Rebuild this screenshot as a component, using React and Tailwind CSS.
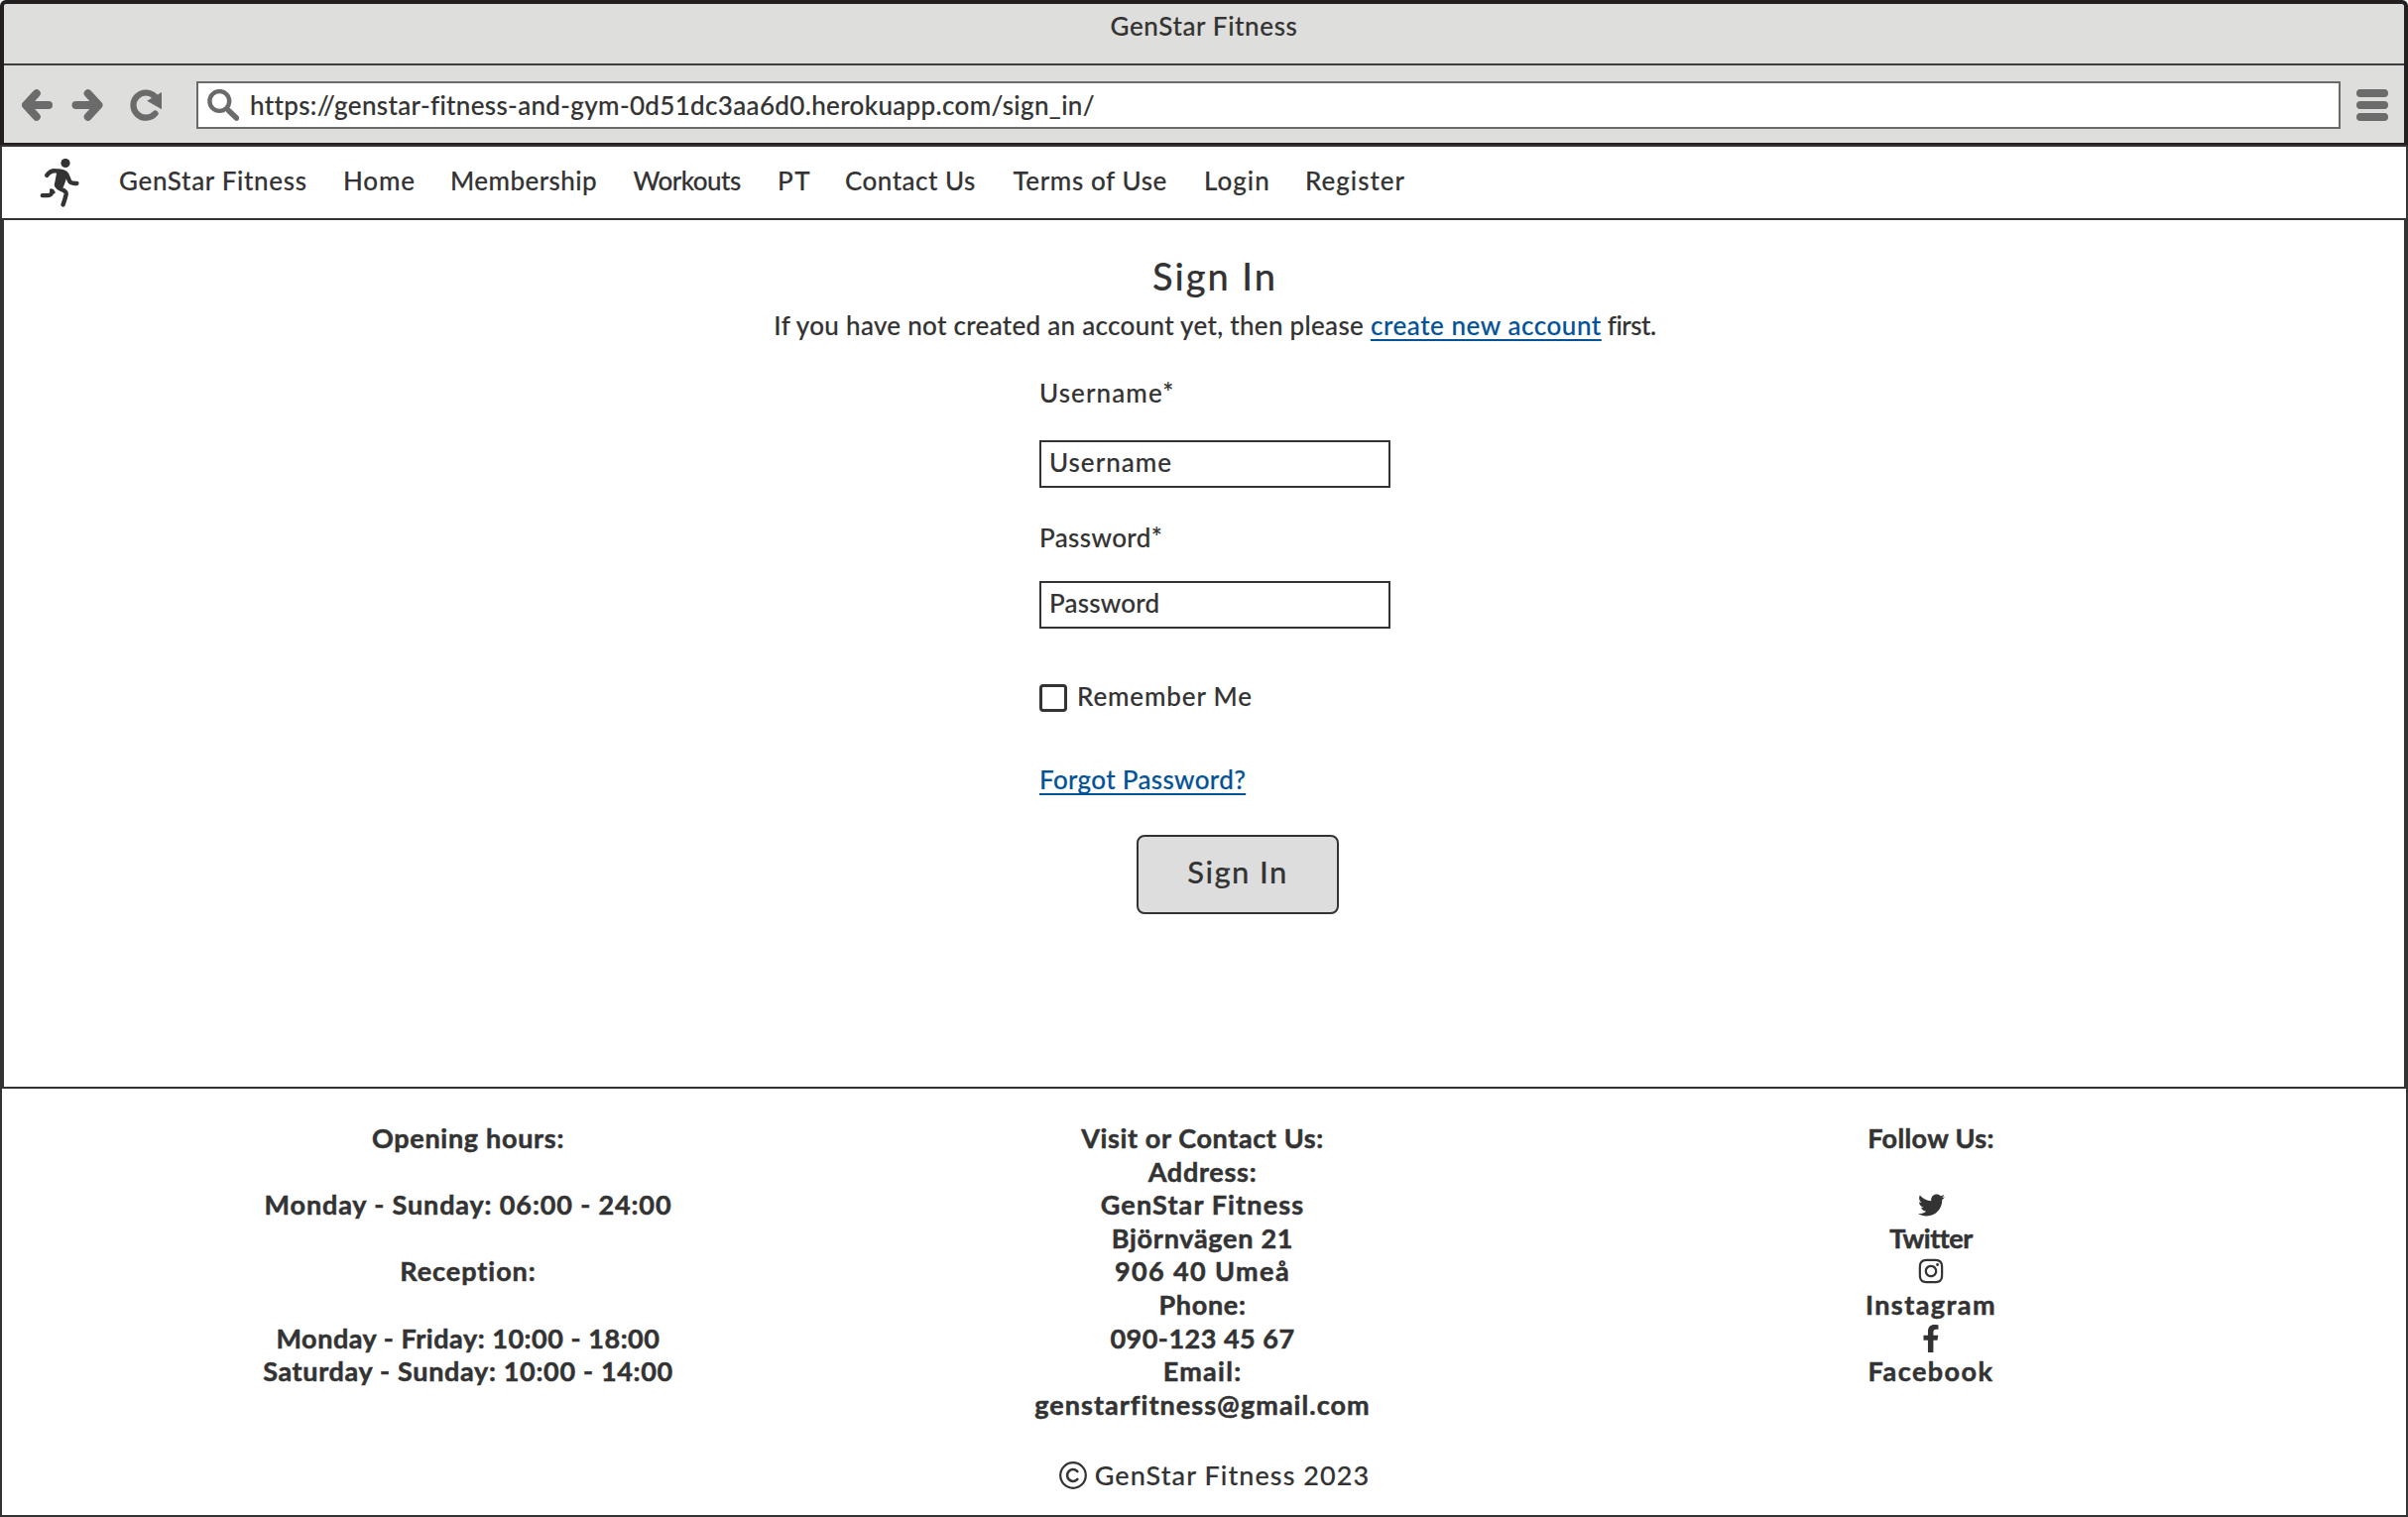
import React from "react";
import { FaTwitter, FaInstagram, FaFacebookF } from "react-icons/fa";

function RunnerIcon() {
  return (
    <svg className="h-[49px] w-10 text-[#333333]" viewBox="0 0 40 49" fill="none" stroke="currentColor" strokeWidth="4.4" strokeLinecap="round" strokeLinejoin="round">
      <circle cx="26" cy="4.5" r="4.6" fill="currentColor" stroke="none" />
      <path d="M7.2 16.8c2.6-3.4 5.2-4.8 8.3-4.6 4.5 0 8 .6 10.6 2.3 2.5 1.8 2.5 6.5 4.7 9.2 1.6 1.4 4.2 1.2 6.6 1.3" />
      <path d="M19.5 13.5 26 16l-4 11.5-5-.8Z" fill="currentColor" />
      <path d="M17 26.5c.4 2.5 2.5 3.5 5 4.5 3.5 1.3 5 2.2 4.7 4.6-.6 3.6-2 7.6-3.1 10.8" />
      <path d="M2.8 37.1h5.5c2.6 0 3.6-.6 4.2-4.4" />
      <path d="m11.2 31.5 3.3 2.6" strokeWidth="2.5" />
    </svg>
  );
}

function BackIcon() {
  return (
    <svg className="h-8 w-8" viewBox="0 0 32 32" fill="none" stroke="#6b6b6b" strokeWidth="8" strokeLinecap="round" strokeLinejoin="round">
      <path d="M14.8 4.3 4 16l10.8 11.7M8 16h19" />
      <path d="M8 13v6" strokeWidth="4" />
    </svg>
  );
}

function ForwardIcon() {
  return (
    <svg className="h-8 w-8" viewBox="0 0 32 32" fill="none" stroke="#6b6b6b" strokeWidth="8" strokeLinecap="round" strokeLinejoin="round">
      <path d="M16.7 4.3 27.5 16 16.7 27.7M24 16H4.5" />
      <path d="M24 13v6" strokeWidth="4" />
    </svg>
  );
}

function ReloadIcon() {
  return (
    <svg className="h-8 w-8" viewBox="0 0 32 32" fill="none">
      <path d="M25.5 24.5A12.6 12.6 0 1 1 25 7.2" stroke="#6b6b6b" strokeWidth="6.2" strokeLinecap="round" />
      <path d="M32 3v17.2L17.2 11.8Z" fill="#6b6b6b" />
    </svg>
  );
}

function SearchIcon() {
  return (
    <svg className="h-8 w-8" viewBox="0 0 32 32" fill="none" stroke="#6b6b6b">
      <circle cx="12.3" cy="12" r="9.9" strokeWidth="4.4" />
      <path d="m19.6 19.6 2.4 2.4" strokeWidth="4.4" />
      <path d="m22 22 7.4 7" strokeWidth="5.6" strokeLinecap="round" />
    </svg>
  );
}

function CopyrightIcon() {
  return (
    <svg className="h-7 w-7" viewBox="0 0 28 28" fill="none" stroke="#333333" strokeLinecap="round">
      <circle cx="14" cy="14" r="12.8" strokeWidth="2.2" />
      <path d="M18.4 10.1A5.9 5.9 0 1 0 18.4 17.9" strokeWidth="2.5" />
    </svg>
  );
}

function BrowserChrome() {
  return (
    <header className="h-[148px] rounded-t-[6px] border-4 border-b-0 border-[#231f20] bg-[#dededc]">
      <div className="h-[62px] border-b-2 border-[#3f3f3f] pt-[6px] text-center text-[26px] leading-8 tracking-[0.62px]">
        GenStar Fitness
      </div>
      <div className="flex h-[78px] items-start pt-4">
        <div className="flex h-12 w-[194px] items-center pl-[18px]">
          <BackIcon />
          <span className="ml-[18px] flex"><ForwardIcon /></span>
          <span className="ml-[27px] flex"><ReloadIcon /></span>
        </div>
        <div className="flex h-12 w-[2162px] items-center border-2 border-[#6b6b6b] bg-white pl-[9px]">
          <SearchIcon />
          <span className="ml-[11px] text-[26px] leading-8 tracking-[0.34px]">
            https://genstar-fitness-and-gym-0d51dc3aa6d0.herokuapp.com/sign_in/
          </span>
        </div>
        <div className="ml-4 flex h-12 flex-col justify-center gap-1">
          <div className="h-2 w-8 rounded-full bg-[#6b6b6b]" />
          <div className="h-2 w-8 rounded-full bg-[#6b6b6b]" />
          <div className="h-2 w-8 rounded-full bg-[#6b6b6b]" />
        </div>
      </div>
      <div className="-mx-1 h-1 border-t-2 border-[#231f20] bg-[#333333]" />
    </header>
  );
}

function NavBar() {
  return (
    <nav className="flex h-[74px] items-center border-x-2 border-b-2 border-[#333333] pb-1 text-[26px] leading-8">
      <div className="ml-[38px] flex pt-1">
        <RunnerIcon />
      </div>
      <div className="ml-10 grid grid-cols-[226px_108px_184.5px_145.5px_68px_169.5px_192.5px_102px_110px] whitespace-nowrap">
        <a className="tracking-[0.66px]">GenStar Fitness</a>
        <a className="tracking-[0.8px]">Home</a>
        <a className="tracking-[0.44px]">Membership</a>
        <a className="tracking-[-0.55px]">Workouts</a>
        <a className="tracking-[1.6px]">PT</a>
        <a className="tracking-[0.48px]">Contact Us</a>
        <a className="tracking-[0.6px]">Terms of Use</a>
        <a className="tracking-[1px]">Login</a>
        <a className="tracking-[1px]">Register</a>
      </div>
    </nav>
  );
}

function SignIn() {
  return (
    <main className="flex h-[876px] flex-col items-center border-x-4 border-b-2 border-[#333333] pl-[22px] pt-[33px] text-[26px] leading-8">
      <h1 className="text-[38px] leading-[46px] tracking-[2px]">Sign In</h1>
      <p className="mt-[11px] whitespace-nowrap">
        <span className="tracking-[0.3px]">If you have not created an account yet, then please </span>
        <a className="text-[#045397] underline decoration-2 underline-offset-4 tracking-[0.55px] [text-decoration-skip-ink:none]">create new account</a>
        <span className="tracking-[-0.5px]"> first.</span>
      </p>
      <form className="mt-9 flex w-[354px] flex-col">
        <label className="tracking-[1.1px]">Username*</label>
        <div className="mt-8 flex h-12 items-center border-2 border-[#333333] pb-1 pl-2 tracking-[1px]">Username</div>
        <label className="mt-[34px] tracking-[0.38px]">Password*</label>
        <div className="mt-7 flex h-12 items-center border-2 border-[#333333] pb-1 pl-2 tracking-[0.2px]">Password</div>
        <label className="mt-14 flex h-7 items-center tracking-[0.85px]">
          <span className="h-7 w-7 rounded-[4px] border-[3px] border-[#333333]" />
          <span className="ml-[10px] pb-1">Remember Me</span>
        </label>
        <a className="mt-[52px] self-start text-[#045397] underline decoration-2 underline-offset-4 tracking-[0.33px] [text-decoration-skip-ink:none]">Forgot Password?</a>
        <button type="button" className="ml-[98px] mt-10 h-20 w-[204px] rounded-[8px] border-2 border-[#333333] bg-[#dddddd] pb-[6px] text-[31px] leading-9 tracking-[1.4px]">
          Sign In
        </button>
      </form>
    </main>
  );
}

function Footer() {
  return (
    <footer className="h-[432px] border-x-2 border-b-2 border-[#333333] pt-[33px] text-[27px] leading-[33.6px]">
      <div className="ml-[100px] flex h-[302.4px] text-center font-bold [-webkit-text-stroke:0.5px_currentColor]">
        <div className="w-[740px]">
          <p className="tracking-[0.7px]">Opening hours:</p>
          <p className="mt-[33.6px] tracking-[0.86px]">Monday - Sunday: 06:00 - 24:00</p>
          <p className="mt-[33.6px] tracking-[0.96px]">Reception:</p>
          <p className="mt-[33.6px] tracking-[0.53px]">Monday - Friday: 10:00 - 18:00</p>
          <p className="tracking-[0.67px]">Saturday - Sunday: 10:00 - 14:00</p>
        </div>
        <div className="w-[741px]">
          <p className="tracking-[0.62px]">Visit or Contact Us:</p>
          <p className="tracking-[0.72px]">Address:</p>
          <p className="tracking-[1.13px]">GenStar Fitness</p>
          <p className="tracking-[0.72px]">Björnvägen 21</p>
          <p className="tracking-[1.39px]">906 40 Umeå</p>
          <p className="tracking-[0.69px]">Phone:</p>
          <p className="tracking-[0.49px]">090-123 45 67</p>
          <p className="tracking-[1.28px]">Email:</p>
          <p className="tracking-[1.04px]">genstarfitness@gmail.com</p>
        </div>
        <div className="w-[728px]">
          <p className="tracking-[0.35px]">Follow Us:</p>
          <div className="mt-[33.6px] flex h-[33.6px] items-center justify-center pt-px">
            <FaTwitter className="size-[27px]" />
          </div>
          <p className="tracking-[-0.45px]">Twitter</p>
          <div className="flex h-[33.6px] items-center justify-center">
            <FaInstagram className="size-[28px]" />
          </div>
          <p className="tracking-[1.44px]">Instagram</p>
          <div className="flex h-[33.6px] items-center justify-center pt-px">
            <FaFacebookF className="size-[28px]" />
          </div>
          <p className="tracking-[1.47px]">Facebook</p>
        </div>
      </div>
      <div className="flex items-center justify-center gap-2 pl-[21px] pt-[38px]">
        <CopyrightIcon />
        <span className="tracking-[1.08px]">GenStar Fitness 2023</span>
      </div>
    </footer>
  );
}

export default function App() {
  return (
    <div className="h-[1530px] w-[2428px] overflow-hidden bg-white font-[Lato,sans-serif] font-medium text-[#333333] [-webkit-text-stroke:0.15px_currentColor]">
      <BrowserChrome />
      <NavBar />
      <SignIn />
      <Footer />
    </div>
  );
}
